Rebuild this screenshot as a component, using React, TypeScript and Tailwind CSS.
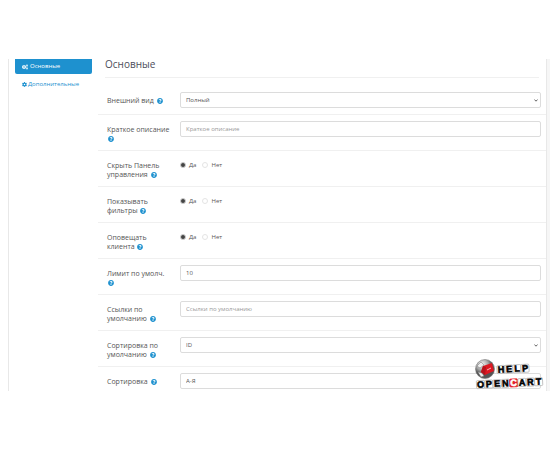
import type { ReactNode } from "react";
import { FaCog, FaCogs, FaQuestionCircle } from "react-icons/fa";

type Kind = "select" | "text" | "radio";

interface Field {
  id: string;
  label: string;
  kind: Kind;
  value?: string;
  placeholder?: string;
}

const fields: Field[] = [
  { id: "view", label: "Внешний вид", kind: "select", value: "Полный" },
  { id: "summary", label: "Краткое описание", kind: "text", placeholder: "Краткое описание" },
  { id: "hide-panel", label: "Скрыть Панель управления", kind: "radio" },
  { id: "filters", label: "Показывать фильтры", kind: "radio" },
  { id: "notify", label: "Оповещать клиента", kind: "radio" },
  { id: "limit", label: "Лимит по умолч.", kind: "text", value: "10" },
  { id: "links", label: "Ссылки по умолчанию", kind: "text", placeholder: "Ссылки по умолчанию" },
  { id: "sort-default", label: "Сортировка по умолчанию", kind: "select", value: "ID" },
  { id: "sort", label: "Сортировка", kind: "select", value: "А-Я" },
];

const controlClass =
  "block h-4 w-full appearance-none rounded-xs border border-[#dcdcdc] bg-white px-[5px] text-[6px] leading-[14px] text-[#555] placeholder:text-[#999]";

function Radio({ name, label, checked }: { name: string; label: string; checked?: boolean }) {
  return (
    <label className="flex items-center gap-[3px]">
      <input
        type="radio"
        name={name}
        defaultChecked={checked}
        className="size-[6px] appearance-none rounded-full border border-[#e4e4e4] bg-white checked:border-[#d0d0d0] checked:bg-[#444]"
      />
      {label}
    </label>
  );
}

function Control({ field }: { field: Field }) {
  if (field.kind === "select") {
    return (
      <div className="relative">
        <select id={field.id} className={controlClass}>
          <option>{field.value}</option>
        </select>
        <svg viewBox="0 0 4 3" className="pointer-events-none absolute top-[7px] right-[3px] h-[3px] w-1" fill="none" stroke="#555">
          <path d="M.4.5 2 2.2 3.6.5" strokeWidth=".9" />
        </svg>
      </div>
    );
  }
  if (field.kind === "text") {
    return (
      <input
        id={field.id}
        type="text"
        defaultValue={field.value}
        placeholder={field.placeholder}
        className={controlClass}
      />
    );
  }
  return (
    <div role="radiogroup" aria-labelledby={`${field.id}-label`} className="flex h-4 items-center gap-[6px] text-[6px] text-[#555]">
      <Radio name={field.id} label="Да" checked />
      <Radio name={field.id} label="Нет" />
    </div>
  );
}

function Row({ field }: { field: Field }) {
  const content: ReactNode = (
    <>
      {field.label}{" "}
      <FaQuestionCircle className="ml-px inline size-[6px] align-[-1px] text-[#1e91cf]" />
    </>
  );
  return (
    <div className="flex min-h-9 border-t border-[#f0f0f0] pt-[6px] pr-[5px] pl-[9px] first:min-h-[22px] first:border-t-0 first:pt-0 last:min-h-0 last:pb-[2px]">
      <div className="w-[73px] shrink-0 pt-[4px] pr-[8px] text-[7px] leading-[9px] text-[#555]">
        {field.kind === "radio" ? (
          <span id={`${field.id}-label`}>{content}</span>
        ) : (
          <label htmlFor={field.id}>{content}</label>
        )}
      </div>
      <div className="min-w-0 flex-1">
        <Control field={field} />
      </div>
    </div>
  );
}

function Watermark() {
  const help = ["H", "E", "L", "P"];
  const cart = ["O", "P", "E", "N", "C", "A", "R", "T"];
  return (
    <svg viewBox="0 0 70 32" className="absolute right-[3px] bottom-0 h-8 w-[70px]" fontFamily="Liberation Sans, sans-serif" fontWeight="bold" textAnchor="middle">
      <defs>
        <radialGradient id="globe" cx="35%" cy="25%">
          <stop offset="0" stopColor="#f4f4f4" />
          <stop offset=".6" stopColor="#aaa" />
          <stop offset="1" stopColor="#555" />
        </radialGradient>
      </defs>
      <circle cx="11" cy="10" r="9.500" fill="url(#globe)" stroke="#777" strokeWidth=".6" />
      <path d="M3 7 7 3l3 3-4 3zM4 13l4 1 2 3-3 1z" fill="#eee" stroke="#777" strokeWidth=".5" />
      <path d="m9 7 9-3 2 8-9 4-4-3z" fill="#dd1822" />
      <path d="m9 7 3 1-1 8-4-3z" fill="#b5131c" />
      <path d="m13 11 4-2" stroke="#fff" strokeWidth=".7" />
      {help.map((letter, i) => (
        <g key={letter} transform={`translate(${27 + i * 8} ${10.5 - i * 0.4}) rotate(-3)`}>
          <rect x="-4" y="-4" width="8" height="8" rx="1" fill="#fff" stroke="#aaa" strokeWidth=".7" />
          <text y="3" fontSize="9" fill="#000" stroke="#000" strokeWidth=".6">{letter}</text>
        </g>
      ))}
      {cart.map((letter, i) => (
        <g key={letter} transform={`translate(${6.5 + i * 8.3} ${25.5 - i * 0.4}) rotate(-3)`}>
          <rect x="-4" y="-4" width="8" height="8" rx="1" fill={letter === "C" ? "#e3202a" : "#fff"} stroke={letter === "C" ? "#e3202a" : "#aaa"} strokeWidth=".7" />
          <text y="3" fontSize="9" fill={letter === "C" ? "#fff" : "#000"} stroke={letter === "C" ? "#fff" : "#000"} strokeWidth=".6">{letter}</text>
        </g>
      ))}
    </svg>
  );
}

export default function App() {
  return (
    <div className="bg-white py-[59px] font-['Open_Sans','Noto_Sans',sans-serif]">
      <div className="relative border-r-[3px] border-[#f6f6f6] pl-2">
        <div className="flex border-x border-[#e8e8e8] pl-[6px]">
          <nav className="w-[77px] shrink-0 text-[6px] leading-[9px]">
            <a href="#main" className="flex h-[15px] items-center gap-[2px] rounded-b-xs bg-[#1e91cf] px-[7px] text-white">
              <FaCogs className="size-[6px]" />
              Основные
            </a>
            <a href="#extra" className="mt-[2px] flex h-4 items-center gap-px px-[7px] text-[#1e91cf]">
              <FaCog className="size-[5px]" />
              Дополнительные
            </a>
          </nav>
          <main className="min-w-0 flex-1 pl-[6px]">
            <h1 className="mr-[7px] mb-[14px] ml-[7px] h-[19px] border-b border-[#f0f0f0] text-[10px] leading-[10px] text-[#4c4d5a]">
              Основные
            </h1>
            <form>
              {fields.map((field) => (
                <Row key={field.id} field={field} />
              ))}
            </form>
          </main>
        </div>
        <Watermark />
      </div>
    </div>
  );
}
